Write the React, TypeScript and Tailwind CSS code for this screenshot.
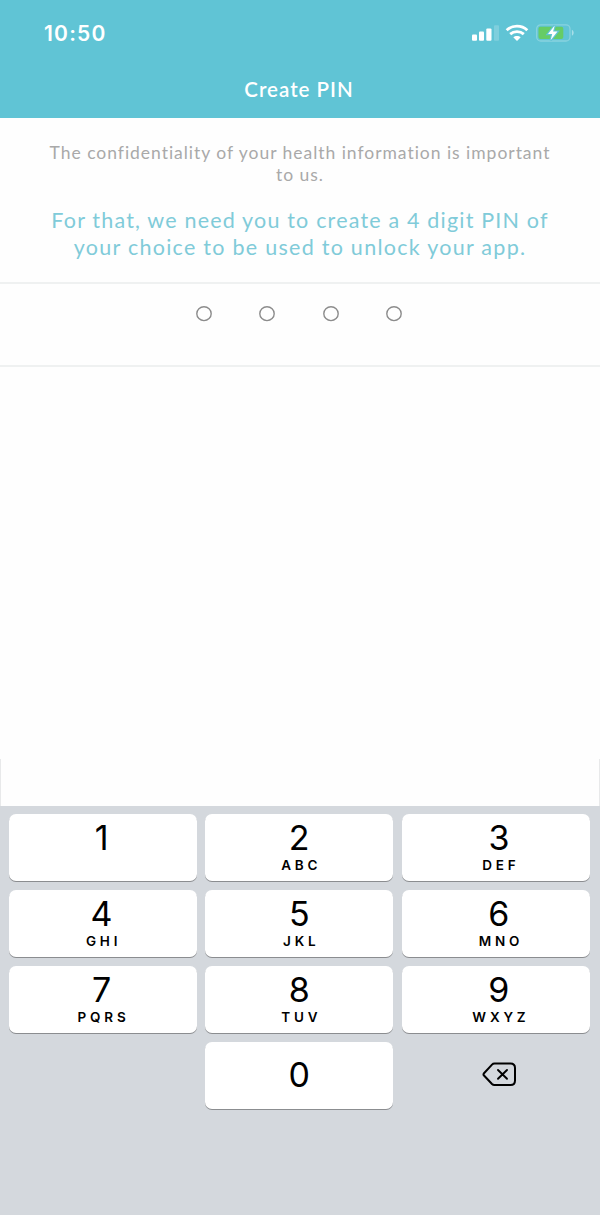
import React, { useState } from 'react';

const keys = [
  { digit: '1', letters: '' },
  { digit: '2', letters: 'ABC' },
  { digit: '3', letters: 'DEF' },
  { digit: '4', letters: 'GHI' },
  { digit: '5', letters: 'JKL' },
  { digit: '6', letters: 'MNO' },
  { digit: '7', letters: 'PQRS' },
  { digit: '8', letters: 'TUV' },
  { digit: '9', letters: 'WXYZ' }
];

// Small optical nudge of the labels in the outer columns
const columnPadding = ['pr-[2px]', '', 'pl-[6px]'];

const PIN_LENGTH = 4;

const SignalIcon = () => (
  <svg width="28" height="18" viewBox="0 0 28 18" fill="white">
    <rect x="0" y="10.5" width="5" height="6.3" rx="1" />
    <rect x="7" y="7.5" width="5" height="9.3" rx="1" />
    <rect x="14.3" y="4.5" width="5.2" height="12.3" rx="1" />
    <rect x="22" y="1.3" width="5" height="15.5" rx="1" fillOpacity="0.2" />
  </svg>
);

const WifiIcon = () => (
  <svg width="24" height="18" viewBox="0 0 24 18" fill="none" stroke="white" strokeWidth="2.9">
    <path d="M1.7 6.2C7.4.8 16.6.8 22.3 6.2" />
    <path d="M5.2 10.2C9 6.8 15 6.8 18.8 10.2" />
    <path d="M8.3 13.3C10.3 11.5 13.7 11.5 15.7 13.3L12 17Z" fill="white" stroke="none" />
  </svg>
);

const BatteryIcon = () => (
  <svg width="39" height="18" viewBox="0 0 39 18" fill="none">
    <rect x="0.7" y="0.8" width="33.3" height="16.2" rx="4" stroke="white" strokeOpacity="0.25" strokeWidth="1.3" />
    <path d="M35.9 5.8C38.2 6.7 38.2 10.9 35.9 11.8Z" fill="white" fillOpacity="0.45" />
    <rect x="2.5" y="2.8" width="24.8" height="12.2" rx="2" fill="#66cc66" />
    <path d="M18.7 1.6L12 10H16.2L14.6 16.2L21.5 7.6H17.1Z" fill="white" stroke="#60c4d5" strokeWidth="2.4" paintOrder="stroke" />
  </svg>
);

const BackspaceIcon = () => (
  <svg width="35" height="25" viewBox="0 0 35 25" fill="none" stroke="black" strokeWidth="2" strokeLinejoin="round" strokeLinecap="round">
    <path d="M12.5 1.5H28.5Q33 1.5 33 6V18.5Q33 23 28.5 23H12.5Q11 23 10 22L2 13.5Q1 12.4 2 11.2L10 2.6Q11 1.5 12.5 1.5Z" />
    <path d="M16 8L25 16.8M25 8L16 16.8" strokeWidth="1.9" />
  </svg>
);

const PinDot = ({ filled }: { filled: boolean }) => (
  <svg width="16" height="16" viewBox="0 0 16 16">
    <ellipse cx="8" cy="7.7" rx="7.2" ry="6.9" fill={filled ? '#8c8c8c' : 'none'} stroke="#8c8c8c" strokeWidth="1.4" />
  </svg>
);

const App = () => {
  const [pin, setPin] = useState('');

  const press = (digit: string) => {
    if (pin.length < PIN_LENGTH) setPin(pin + digit);
  };

  return (
    <div className="w-[600px] h-[1215px] flex flex-col overflow-hidden bg-[#fefefe] font-['Lato',sans-serif]">
      {/* Header */}
      <header className="h-[118px] shrink-0 bg-[#60c4d5] text-white">
        <div className="h-[66px] flex justify-between pl-11 pr-[25px]">
          <span className="pt-5 font-['Inter',sans-serif] font-semibold text-[21px] leading-7 tracking-[1.2px]">10:50</span>
          <div className="flex items-start pt-6">
            <SignalIcon />
            <span className="w-[5px]" />
            <WifiIcon />
            <span className="w-[7px]" />
            <BatteryIcon />
          </div>
        </div>
        <h1 className="text-center text-[20.5px] leading-[47px] font-semibold tracking-[1px] pr-[2px]">Create PIN</h1>
      </header>

      {/* Intro copy */}
      <section className="h-[166px] shrink-0 border-b-2 border-[#eff1f1] text-center whitespace-nowrap">
        <p className="pt-[24px] text-[17.5px] leading-[22px] tracking-[0.97px] text-[#a9a9a9]">
          The confidentiality of your health information is important
          <br />
          to us.
        </p>
        <p className="pt-[21px] text-[21.5px] leading-[27px] text-[#80cbd9]">
          <span className="tracking-[1.18px]">For that, we need you to create a 4 digit PIN of</span>
          <br />
          <span className="tracking-[1.27px]">your choice to be used to unlock your app.</span>
        </p>
      </section>

      {/* PIN dots */}
      <section className="h-[83px] shrink-0 border-b-2 border-[#eff1f1] flex justify-center gap-[47.6px] pt-[22px] pr-[2px]">
        {Array.from({ length: PIN_LENGTH }, (_, i) => (
          <PinDot key={i} filled={i < pin.length} />
        ))}
      </section>

      <div className="flex-1 flex flex-col justify-end">
        <div className="h-[47px] border-x border-[#e8e9ea]" />
      </div>

      {/* Keypad */}
      <div className="h-[409px] shrink-0 bg-[#d4d8dd] pt-2 pl-[8.5px] pr-[10px] font-['Inter',sans-serif] text-black">
        <div className="grid grid-cols-3 gap-x-[8.5px] gap-y-[9px]">
          {keys.map((key, i) => (
            <button
              key={key.digit}
              onClick={() => press(key.digit)}
              className={`h-[67px] rounded-[7px] bg-white shadow-[0_1px_0_#8b8d90] flex flex-col items-center ${columnPadding[i % 3]}`}
            >
              <span className="pt-[6px] text-[34px] leading-[36px]">{key.digit}</span>
              <span className="pl-[4px] text-[13.5px] leading-[18px] font-semibold tracking-[3.8px]">{key.letters}</span>
            </button>
          ))}
          <span />
          <button
            onClick={() => press('0')}
            className="h-[67px] rounded-[7px] bg-white shadow-[0_1px_0_#8b8d90] text-[34px] leading-[36px] pb-[2px]"
          >
            0
          </button>
          <button onClick={() => setPin(pin.slice(0, -1))} className="h-[67px] flex items-center justify-center pl-[8px] pb-[2px]">
            <BackspaceIcon />
          </button>
        </div>
      </div>
    </div>
  );
};

export default App;
